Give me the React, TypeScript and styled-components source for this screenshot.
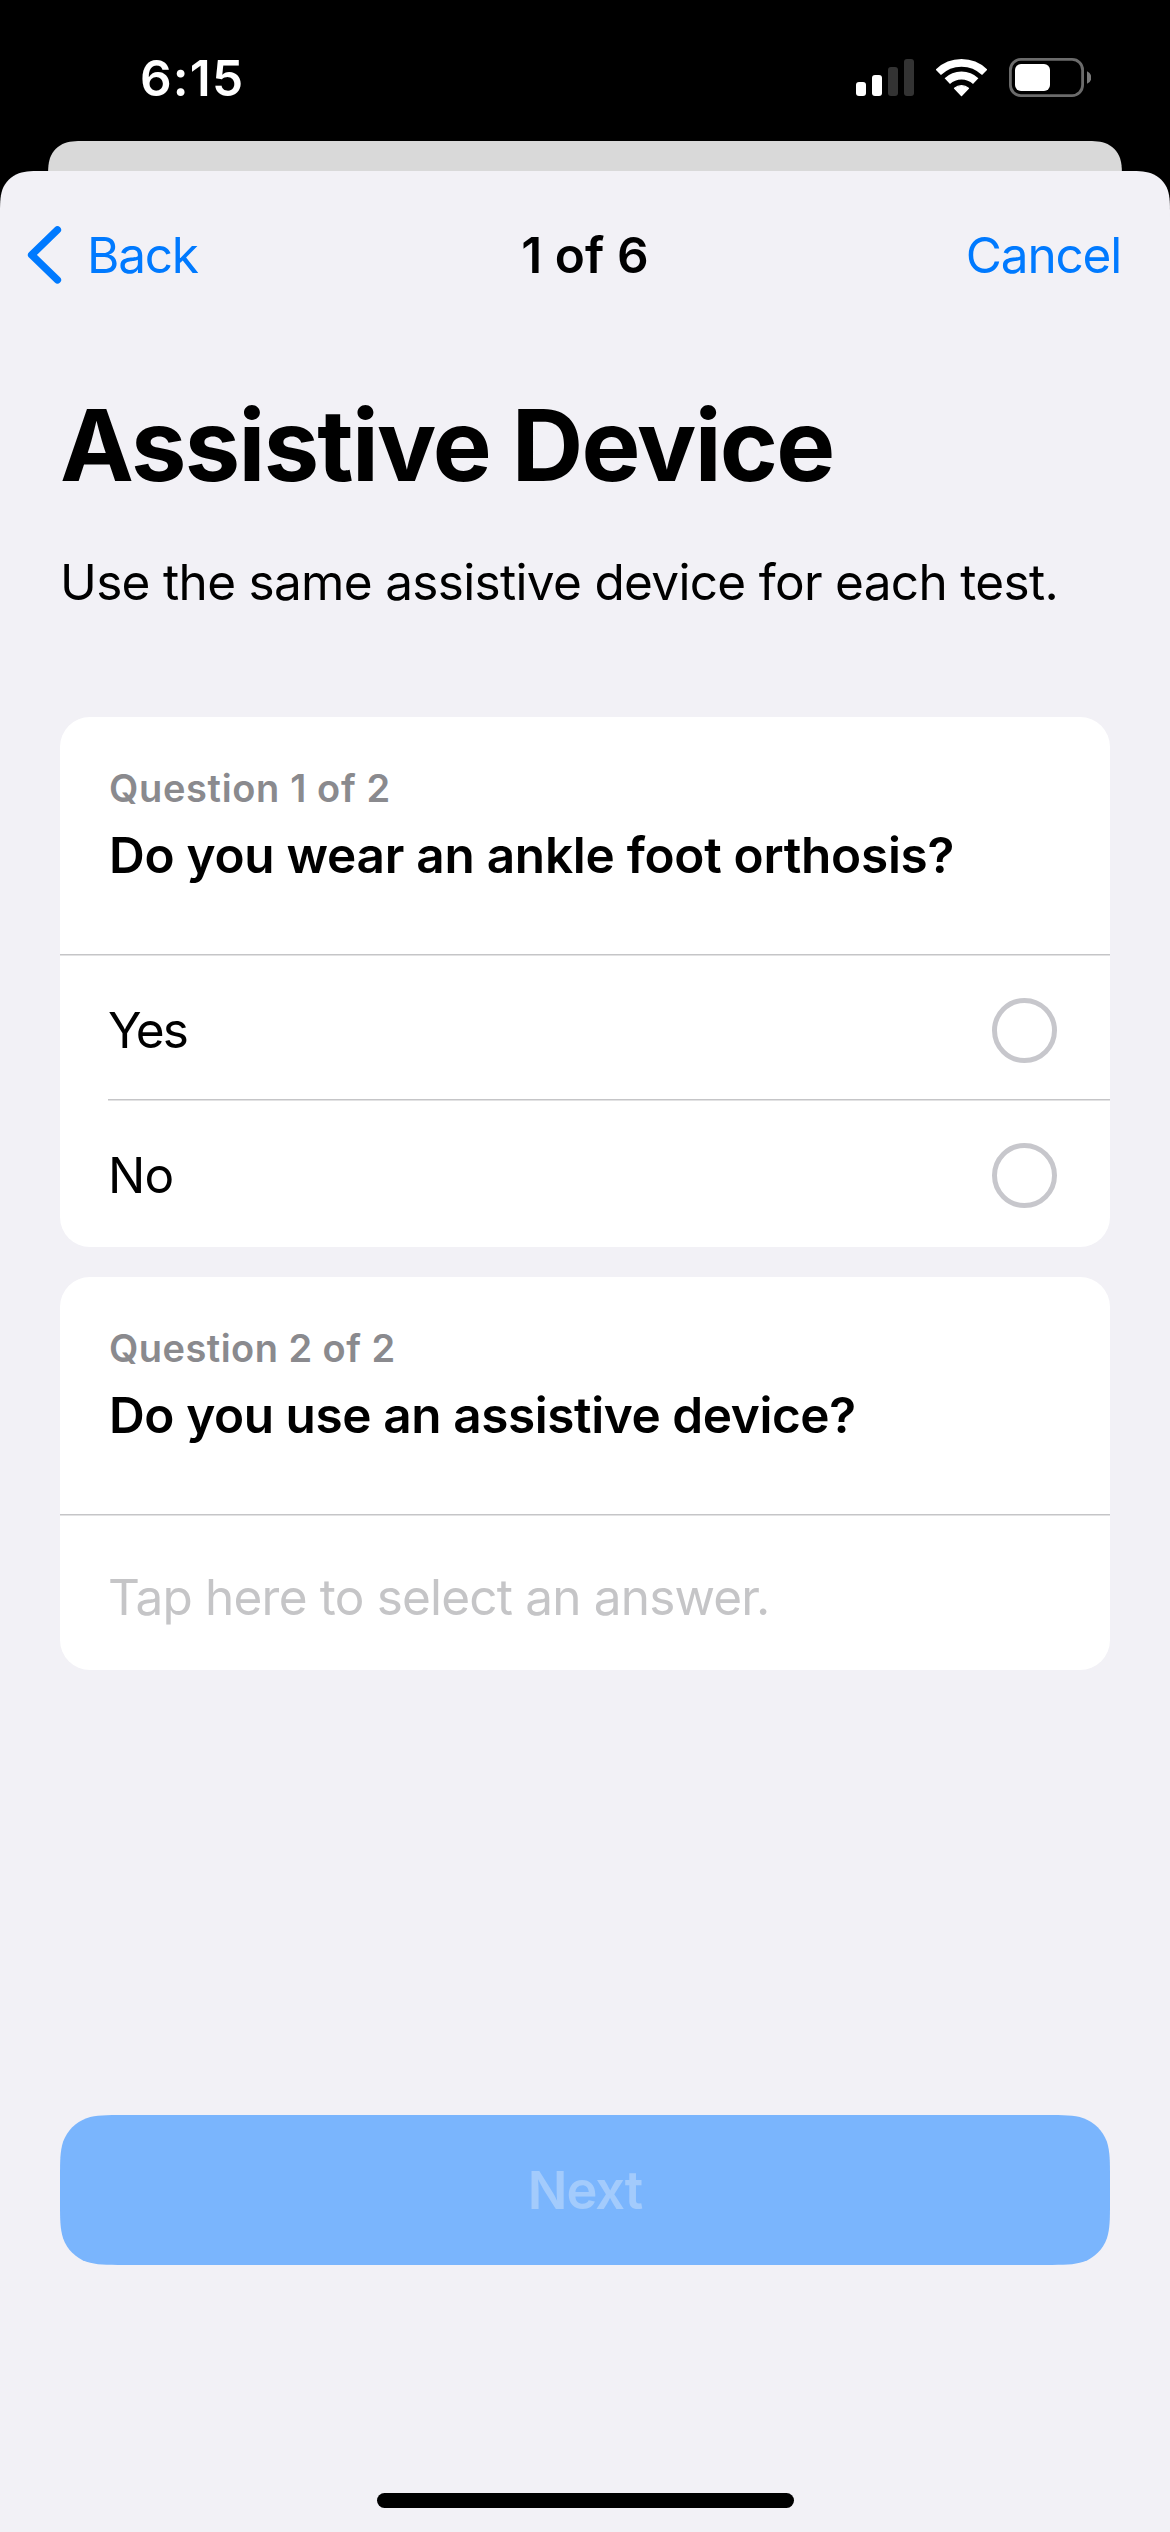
import React, { useState } from 'react';
import styled, { createGlobalStyle } from 'styled-components';

const color = {
  sheet: '#f2f1f6',
  behind: '#d9d9d9',
  card: '#ffffff',
  accent: '#007aff',
  label: '#8a8a8e',
  placeholder: '#c5c5c7',
  ring: '#c7c7cc',
  button: '#7ab5fd',
  buttonText: '#a3cbfc',
};

/* Continuous-curvature rounded rectangle; `bottom` rounds the lower corners too. */
function smoothRect(w: number, h: number, r: number, bottom = true): string {
  const k = [1.528665, 1.08849296, 0.86840694, 0.63149379, 0.37282383, 0.16905956, 0.07491139].map(
    (n) => +(n * r).toFixed(2),
  );
  const [a, b, c, d, e, f, g] = k;
  const top =
    `M${a} 0H${w - a}C${w - b} 0 ${w - c} 0 ${w - d} ${g}` +
    `C${w - e} ${f} ${w - f} ${e} ${w - g} ${d}C${w} ${c} ${w} ${b} ${w} ${a}`;
  const low = bottom
    ? `V${h - a}C${w} ${h - b} ${w} ${h - c} ${w - g} ${h - d}` +
      `C${w - f} ${h - e} ${w - e} ${h - f} ${w - d} ${h - g}` +
      `C${w - c} ${h} ${w - b} ${h} ${w - a} ${h}H${a}` +
      `C${b} ${h} ${c} ${h} ${d} ${h - g}C${e} ${h - f} ${f} ${h - e} ${g} ${h - d}` +
      `C0 ${h - c} 0 ${h - b} 0 ${h - a}`
    : `V${h}H0`;
  return `path("${top}${low}V${a}C0 ${b} 0 ${c} ${g} ${d}C${f} ${e} ${e} ${f} ${d} ${g}C${c} 0 ${b} 0 ${a} 0Z")`;
}

const GlobalStyle = createGlobalStyle`
  * { box-sizing: border-box; }
  body {
    margin: 0;
    background: #000;
    font-family: Inter, "Liberation Sans", sans-serif;
  }
  button {
    border: 0;
    padding: 0;
    background: none;
    font: inherit;
    color: inherit;
  }
`;

const Screen = styled.div`
  display: flex;
  flex-direction: column;
  width: 1170px;
  height: 2532px;
  overflow: hidden;
  background: #000;
`;

const StatusBar = styled.header`
  flex: none;
  display: flex;
  align-items: center;
  justify-content: space-between;
  height: 141px;
  padding: 48px 79px 33px 140px;
`;

const Clock = styled.span`
  font-size: 49.5px;
  font-weight: 600;
  line-height: 60px;
  letter-spacing: 1.2px;
  color: #fff;
`;

const StatusIcons = styled.div`
  display: flex;
  align-items: center;

  svg {
    display: block;
    height: 42px;
  }
  svg + svg {
    margin-left: 22px;
  }
`;

const SheetBehind = styled.div`
  flex: none;
  height: 30px;
  margin: 0 48px;
  background: ${color.behind};
  clip-path: ${smoothRect(1074, 100, 27, false)};
`;

const Sheet = styled.main`
  flex: 1;
  display: flex;
  flex-direction: column;
  background: ${color.sheet};
  clip-path: ${smoothRect(1170, 2361, 30, false)};
`;

const NavBar = styled.nav`
  flex: none;
  display: grid;
  grid-template-columns: 1fr auto 1fr;
  align-items: center;
  height: 168px;
  padding: 0 24px;
  font-size: 49.5px;
  line-height: 60px;
`;

const NavButton = styled.button<{ $end?: boolean }>`
  display: flex;
  align-items: center;
  justify-self: ${(p) => (p.$end ? 'end' : 'start')};
  gap: 25px;
  margin-right: ${(p) => (p.$end ? 25 : 0)}px;
  color: ${color.accent};
  letter-spacing: -1.2px;
  line-height: 60px;

  svg {
    display: block;
  }
`;

const NavTitle = styled.span`
  font-weight: 600;
  letter-spacing: 0.1px;
`;

const Content = styled.section`
  flex: 1;
  display: flex;
  flex-direction: column;
  padding: 46px 60px 24px;
`;

const Title = styled.h1`
  margin: 0;
  font-size: 99px;
  font-weight: 700;
  line-height: 120px;
  letter-spacing: -1.72px;
  white-space: nowrap;
`;

const Subtitle = styled.p`
  margin: 47px 0 105px;
  font-size: 49.5px;
  line-height: 60px;
  letter-spacing: -0.68px;
  white-space: nowrap;
`;

const CardList = styled.div`
  display: flex;
  flex-direction: column;
  gap: 30px;
`;

const Card = styled.article`
  display: flex;
  flex-direction: column;
  border-radius: 30px;
  background: ${color.card};
  overflow: hidden;
`;

const CardHeader = styled.div`
  display: flex;
  flex-direction: column;
  gap: 14px;
  height: 237px;
  padding: 48px 48px 0 49px;
`;

const Counter = styled.span<{ $tracking: number }>`
  font-size: 38px;
  font-weight: 600;
  line-height: 46px;
  letter-spacing: ${(p) => p.$tracking}px;
  color: ${color.label};
`;

const Prompt = styled.h2<{ $tracking: number }>`
  margin: 0;
  font-size: 49.5px;
  font-weight: 600;
  line-height: 60px;
  letter-spacing: ${(p) => p.$tracking}px;
  white-space: nowrap;
`;

const Divider = styled.div<{ $inset?: boolean }>`
  height: 2px;
  margin-left: ${(p) => (p.$inset ? 48 : 0)}px;
  background: linear-gradient(#c5c5c7 50%, #e2e2e3 50%);
`;

const Choices = styled.div`
  padding-bottom: 3px;
`;

const Choice = styled.button`
  display: flex;
  align-items: center;
  justify-content: space-between;
  width: 100%;
  height: 143px;
  padding: 6px 53px 0 48px;
`;

const ChoiceLabel = styled.span<{ $tracking: number }>`
  margin-top: -1px;
  font-size: 49.5px;
  line-height: 60px;
  letter-spacing: ${(p) => p.$tracking}px;
`;

const Ring = styled.span<{ $on: boolean }>`
  width: 65px;
  height: 65px;
  border: 5px solid ${(p) => (p.$on ? color.accent : color.ring)};
  border-radius: 50%;
`;

const AnswerField = styled.button`
  height: 154px;
  padding: 51px 48px 43px;
  font-size: 49.5px;
  line-height: 60px;
  letter-spacing: -0.81px;
  text-align: left;
  color: ${color.placeholder};
`;

const Footer = styled.footer`
  display: flex;
  flex-direction: column;
  align-items: center;
  gap: 228px;
  margin-top: auto;
`;

const NextButton = styled.button`
  width: 1050px;
  height: 150px;
  background: ${color.button};
  clip-path: ${smoothRect(1050, 150, 42)};
  color: ${color.buttonText};
  font-size: 52.3px;
  font-weight: 600;
  letter-spacing: -1px;
  line-height: 150px;
`;

const HomeIndicator = styled.div`
  width: 417px;
  height: 15px;
  border-radius: 8px;
  background: #000;
`;

const SignalIcon = () => (
  <svg width="58" height="42" viewBox="856 57 58 42" fill="#fff">
    <rect x="856" y="82" width="10" height="14" rx="3" />
    <rect x="872" y="75" width="10" height="21" rx="3" />
    <rect x="888" y="67" width="10" height="29" rx="3" fill="#333" />
    <rect x="904" y="59" width="10" height="37" rx="3" fill="#333" />
  </svg>
);

const WifiIcon = () => (
  <svg width="51" height="42" viewBox="936 57 51 42" fill="none" stroke="#fff">
    <path d="M938.3 72.3A33.3 33.3 0 0 1 984.7 72.3" strokeWidth="7.6" />
    <path d="M947.3 81.2A20.6 20.6 0 0 1 975.7 81.2" strokeWidth="7.8" />
    <path
      d="M961.5 95.4L954.6 88.2A10.6 10.6 0 0 1 968.4 88.2Z"
      fill="#fff"
      strokeWidth="1.4"
      strokeLinejoin="round"
    />
  </svg>
);

const BatteryIcon = () => (
  <svg width="82" height="42" viewBox="1009 57 82 42">
    <rect x="1010.4" y="59.4" width="72.2" height="36.2" rx="10.5" fill="none" stroke="#6b6b6b" strokeWidth="2.8" />
    <rect x="1015" y="64" width="35" height="27" rx="6" fill="#fff" />
    <path d="M1087 71.3A6.7 6.7 0 0 1 1087 83.8Z" fill="#7a7a7a" />
  </svg>
);

const ChevronLeft = () => (
  <svg width="38" height="60" viewBox="24 225 38 60" fill="none" stroke={color.accent}>
    <path d="M57.4 229.9L31.6 254.9L57.4 279.9" strokeWidth="7.4" strokeLinecap="round" strokeLinejoin="round" />
  </svg>
);

const choices = [
  { label: 'Yes', tracking: -2 },
  { label: 'No', tracking: -0.8 },
];

export default function App() {
  const [picked, setPicked] = useState<string | null>(null);
  return (
    <>
      <GlobalStyle />
      <Screen>
        <StatusBar>
          <Clock>6:15</Clock>
          <StatusIcons>
            <SignalIcon />
            <WifiIcon />
            <BatteryIcon />
          </StatusIcons>
        </StatusBar>
        <SheetBehind />
        <Sheet>
          <NavBar>
            <NavButton>
              <ChevronLeft />
              Back
            </NavButton>
            <NavTitle>1 of 6</NavTitle>
            <NavButton $end>Cancel</NavButton>
          </NavBar>
          <Content>
            <Title>Assistive Device</Title>
            <Subtitle>Use the same assistive device for each test.</Subtitle>
            <CardList>
              <Card>
                <CardHeader>
                  <Counter $tracking={0.65}>Question 1 of 2</Counter>
                  <Prompt $tracking={-0.27}>Do you wear an ankle foot orthosis?</Prompt>
                </CardHeader>
                <Divider />
                <Choices>
                  {choices.map((c, i) => (
                    <React.Fragment key={c.label}>
                      {i > 0 && <Divider $inset />}
                      <Choice onClick={() => setPicked(c.label)}>
                        <ChoiceLabel $tracking={c.tracking}>{c.label}</ChoiceLabel>
                        <Ring $on={picked === c.label} />
                      </Choice>
                    </React.Fragment>
                  ))}
                </Choices>
              </Card>
              <Card>
                <CardHeader>
                  <Counter $tracking={0.46}>Question 2 of 2</Counter>
                  <Prompt $tracking={-0.41}>Do you use an assistive device?</Prompt>
                </CardHeader>
                <Divider />
                <AnswerField>Tap here to select an answer.</AnswerField>
              </Card>
            </CardList>
            <Footer>
              <NextButton>Next</NextButton>
              <HomeIndicator />
            </Footer>
          </Content>
        </Sheet>
      </Screen>
    </>
  );
}
